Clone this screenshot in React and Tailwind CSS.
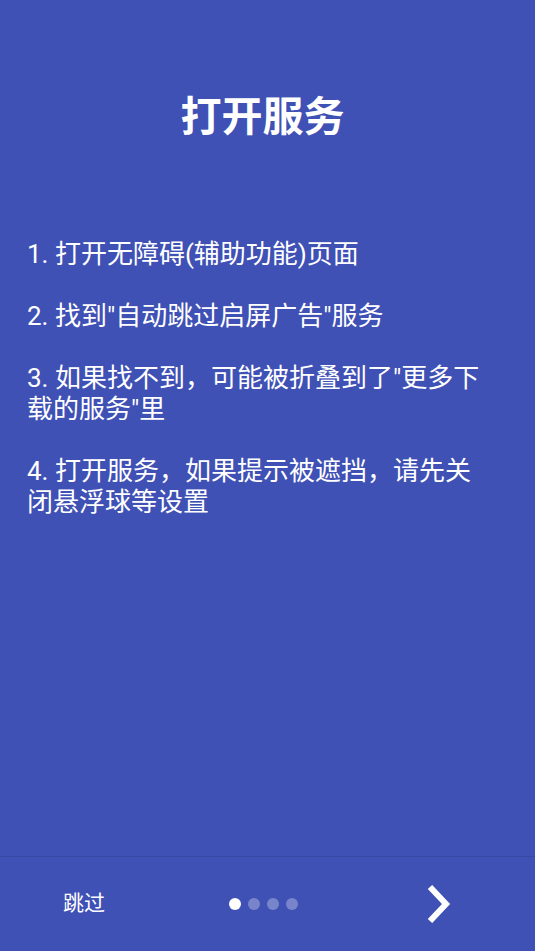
import React from "react";

const steps = [
  "1. 打开无障碍(辅助功能)页面",
  "2. 找到\"自动跳过启屏广告\"服务",
  "3. 如果找不到，可能被折叠到了\"更多下载的服务\"里",
  "4. 打开服务，如果提示被遮挡，请先关闭悬浮球等设置",
];

function Dots({ active = 0, count = 4 }) {
  return (
    <div className="flex items-center gap-[7px]">
      {Array.from({ length: count }).map((_, i) => (
        <span
          key={i}
          className={
            i === active
              ? "w-[12px] h-[12px] rounded-full bg-white"
              : "w-[12px] h-[12px] rounded-full bg-white/30"
          }
        />
      ))}
    </div>
  );
}

export default function App() {
  return (
    <div
      className="w-[535px] h-[951px] bg-[#3f51b5] text-white flex flex-col overflow-hidden"
      style={{ fontFamily: 'Roboto, "Noto Sans CJK SC", sans-serif' }}
    >
      <main className="flex-1 flex flex-col">
        <h1 className="pt-[93px] pr-[10px] text-center text-[41px] leading-[48px] font-bold">
          打开服务
        </h1>
        <div className="mt-[98px] pl-[27px] w-[490px] text-[26px] leading-[31px]">
          {steps.map((s, i) => (
            <p key={i} className={i > 0 ? "mt-[31px]" : ""}>
              {s}
            </p>
          ))}
        </div>
      </main>
      <footer className="h-[95px] border-t border-[#3748a3] flex items-center">
        <button className="w-[168px] text-center text-[21px] text-white">
          跳过
        </button>
        <div className="flex-1 flex justify-center">
          <Dots active={0} />
        </div>
        <div className="w-[177px] pl-[69px] flex items-center">
          <svg width="24" height="38" viewBox="0 0 24 38" fill="none">
            <polyline
              points="3,2 19,19 3,36"
              stroke="white"
              strokeWidth="6"
              strokeLinejoin="miter"
            />
          </svg>
        </div>
      </footer>
    </div>
  );
}
